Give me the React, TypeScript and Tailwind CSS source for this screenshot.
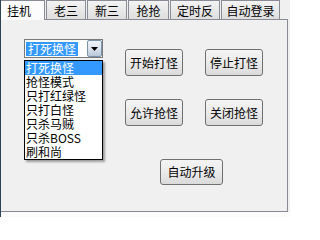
import React from 'react';

const tabs = [
  { label: '挂机', w: 'w-[45px]', active: true },
  { label: '老三', w: 'w-[40px]' },
  { label: '新三', w: 'w-[40px]' },
  { label: '抢抢', w: 'w-[41px]' },
  { label: '定时反', w: 'w-[50px]' },
  { label: '自动登录', w: 'w-[59px]' },
];

const modes = ['打死换怪', '抢怪模式', '只打红绿怪', '只打白怪', '只杀马贼', '只杀BOSS', '刷和尚'];

function WinButton({ children, className = '' }: { children: React.ReactNode; className?: string }) {
  return (
    <button
      className={`flex items-center justify-center rounded-[3px] border border-[#707070] bg-gradient-to-b from-[#f4f4f4] via-[#ebebeb] to-[#dadada] text-[12px] leading-none text-black ${className}`}
    >
      {children}
    </button>
  );
}

export default function App() {
  return (
    <div
      className="relative flex h-[217px] w-[290px] flex-col overflow-hidden border-l border-[#2c4452] bg-[#f0f0f0] text-black"
      style={{ fontFamily: '"Noto Sans CJK SC", "Noto Sans", sans-serif' }}
    >
      {/* tab strip */}
      <div className="relative z-10 flex h-[19px] items-start">
        {tabs.map(t =>
          t.active ? (
            <div
              key={t.label}
              className={`${t.w} -ml-px flex h-[20px] items-start border-r border-t border-[#898c95] bg-[#fcfcfc] pl-[7px] pt-[1px] text-[12px]`}
            >
              {t.label}
            </div>
          ) : (
            <div
              key={t.label}
              className={`${t.w} ml-[1px] flex h-[19px] items-start justify-center border border-b-0 border-[#898c95] bg-gradient-to-b from-[#f3f3f3] to-[#dedede] pt-[1px] text-[12px]`}
            >
              {t.label}
            </div>
          )
        )}
      </div>

      {/* panel */}
      <div className="flex h-[193px] w-[287px] border border-l-0 border-[#898c95] bg-[#f0f0f0]">
        <div className="pl-[23px] pt-[19px]">
          <div className="relative flex h-[19px] w-[79px] items-center border border-[#7a7a7a] bg-white">
            <span className="ml-[1px] bg-[#3399ff] px-[2px] text-[12px] leading-[14px] text-white">打死换怪</span>
            <span className="ml-auto flex h-[17px] w-[15px] items-center justify-center rounded-[2px] border border-[#7d92ad] bg-gradient-to-b from-[#eef3f9] via-[#dbe4ef] to-[#b9c7d8]">
              <svg width="7" height="4" viewBox="0 0 7 4">
                <path d="M0 0h7L3.5 4z" fill="#000" />
              </svg>
            </span>
            <ul className="absolute left-[-1px] top-[20px] flex w-[79px] flex-col border border-black bg-white shadow-[2px_2px_2px_rgba(0,0,0,0.35)]">
              {modes.map((m, i) => (
                <li
                  key={m}
                  className={`flex h-[14px] items-center pl-[1px] text-[12px] leading-[14px] ${i === 0 ? 'bg-[#3399ff] text-white' : 'text-black'}`}
                >
                  {m}
                </li>
              ))}
            </ul>
          </div>
        </div>

        <div className="ml-[22px] pt-[29px]">
          <div className="grid grid-cols-[58px_58px] gap-x-[22px] gap-y-[23px]">
            <WinButton className="h-[27px]">开始打怪</WinButton>
            <WinButton className="h-[27px]">停止打怪</WinButton>
            <WinButton className="h-[27px]">允许抢怪</WinButton>
            <WinButton className="h-[27px]">关闭抢怪</WinButton>
          </div>
          <WinButton className="ml-[35px] mt-[33px] h-[26px] w-[63px]">自动升级</WinButton>
        </div>
      </div>

      <div className="h-[5px] w-full bg-[#fbfbfb]" />
    </div>
  );
}
